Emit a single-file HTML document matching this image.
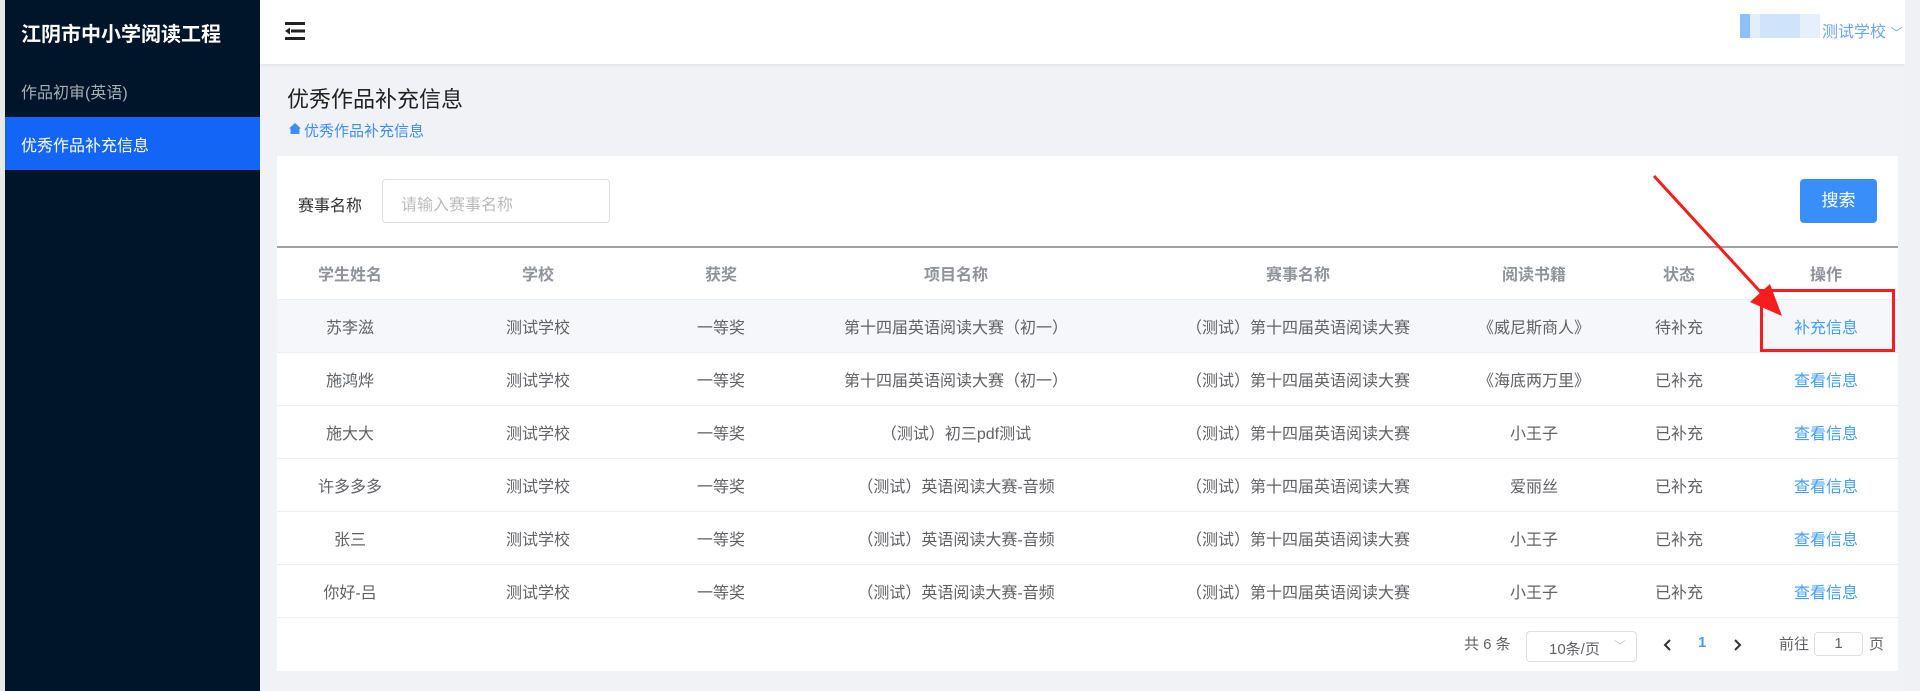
<!DOCTYPE html>
<html><head><meta charset="utf-8"><style>
*{margin:0;padding:0;box-sizing:border-box}
body{width:1920px;height:691px;overflow:hidden;background:#f0f2f5;font-family:"Liberation Sans","Noto Sans CJK SC",sans-serif;position:relative;color:#606266}
.abs{position:absolute}
.c{position:absolute;transform:translate(-50%,-50%);white-space:nowrap;font-size:16px}
</style></head><body>
<div class="abs" style="left:0;top:0;width:5px;height:691px;background:#e8e8e8"></div>
<div class="abs" style="left:5px;top:0;width:255px;height:691px;background:#001529"></div>
<div class="abs" style="left:21px;top:18px;font-size:20px;font-weight:bold;color:#fff">江阴市中小学阅读工程</div>
<div class="abs" style="left:21px;top:79px;font-size:16px;color:#a6adb4">作品初审(英语)</div>
<div class="abs" style="left:5px;top:117px;width:255px;height:53px;background:#1366f5"></div>
<div class="abs" style="left:21px;top:132px;font-size:16px;color:#fff">优秀作品补充信息</div>
<div class="abs" style="left:260px;top:0;width:1645px;height:64px;background:#fff;box-shadow:0 1px 4px rgba(0,21,41,.08)"></div>
<div class="abs" style="left:1905px;top:0;width:15px;height:691px;background:#f0f1f4"></div>
<svg class="abs" style="left:285px;top:22px" width="20" height="18" viewBox="0 0 20 18"><rect x="0" y="0" width="20" height="3" fill="#222"/><rect x="6" y="7.5" width="14" height="3" fill="#222"/><rect x="0" y="15" width="20" height="3" fill="#222"/><path d="M0 9 L5 5.5 L5 12.5Z" fill="#222"/></svg>
<div class="abs" style="left:1740px;top:14px;width:80px;height:24px;background:linear-gradient(90deg,#8fbff8 0 10px,#e2eefc 10px 20px,#cfe3fb 20px 60px,#e6f0fd 60px)"></div>
<div class="abs" style="left:1822px;top:18px;font-size:16px;color:#6aa5f2">测试学校 <span style="font-size:12px">﹀</span></div>
<div class="abs" style="left:287px;top:82px;font-size:22px;color:#222">优秀作品补充信息</div>
<svg class="abs" style="left:289px;top:123px" width="12" height="11" viewBox="0 0 12 11"><path d="M6 0 L12 5.5 L10.5 5.5 L10.5 11 L1.5 11 L1.5 5.5 L0 5.5Z" fill="#3f8cf5"/></svg>
<div class="abs" style="left:304px;top:120px;font-size:15px;color:#3f8cf5">优秀作品补充信息</div>
<div class="abs" style="left:277px;top:156px;width:1621px;height:515px;background:#fff"></div>
<div class="abs" style="left:298px;top:192px;font-size:16px;color:#333">赛事名称</div>
<div class="abs" style="left:382px;top:179px;width:228px;height:44px;border:1px solid #dcdfe6;border-radius:4px;font-size:16px;color:#bbb;padding:11px 18px">请输入赛事名称</div>
<div class="abs" style="left:1800px;top:179px;width:77px;height:44px;background:#3a8ef8;border-radius:4px;color:#fff;font-size:17px;text-align:center;line-height:44px">搜索</div>
<div class="abs" style="left:277px;top:246px;width:1621px;height:2px;background:#a0a0a0"></div>
<div class="abs" style="left:277px;top:299px;width:1621px;height:53px;background:#f5f7fa"></div>
<div id="t"></div>
<div class="abs" style="left:1760px;top:289px;width:135px;height:63px;border:3px solid #f51d1d"></div>
<svg class="abs" style="left:0;top:0" width="1920" height="691"><line x1="1654" y1="176" x2="1766" y2="298" stroke="#f51d1d" stroke-width="3"/><path d="M1782 316 L1750 302 L1770 284Z" fill="#f51d1d"/></svg>
<div class="abs" style="left:1464px;top:633px;font-size:15px">共 6 条</div>
<div class="abs" style="left:1526px;top:631px;width:111px;height:31px;border:1px solid #dcdfe6;border-radius:4px;font-size:15px;padding:6px 0 0 22px">10条/页<span style="position:absolute;right:10px;top:5px;color:#c0c4cc;font-size:12px">﹀</span></div>
<svg class="abs" style="left:1663px;top:638px" width="10" height="14" viewBox="0 0 10 14"><path d="M7 2 L2 7 L7 12" fill="none" stroke="#333" stroke-width="2"/></svg>
<div class="abs" style="left:1698px;top:634px;font-size:15px;color:#409eff;font-weight:bold">1</div>
<svg class="abs" style="left:1732px;top:638px" width="10" height="14" viewBox="0 0 10 14"><path d="M3 2 L8 7 L3 12" fill="none" stroke="#333" stroke-width="2"/></svg>
<div class="abs" style="left:1779px;top:633px;font-size:15px">前往</div>
<div class="abs" style="left:1814px;top:632px;width:49px;height:24px;border:1px solid #dcdfe6;border-radius:4px;font-size:15px;text-align:center;line-height:22px">1</div>
<div class="abs" style="left:1869px;top:633px;font-size:15px">页</div>
<script>
var xs=[350,538,721,956,1298,1534,1679,1826];
var h=["学生姓名","学校","获奖","项目名称","赛事名称","阅读书籍","状态","操作"];
var r=[["苏李滋","测试学校","一等奖","第十四届英语阅读大赛（初一）","（测试）第十四届英语阅读大赛","《威尼斯商人》","待补充","补充信息"],
["施鸿烨","测试学校","一等奖","第十四届英语阅读大赛（初一）","（测试）第十四届英语阅读大赛","《海底两万里》","已补充","查看信息"],
["施大大","测试学校","一等奖","（测试）初三pdf测试","（测试）第十四届英语阅读大赛","小王子","已补充","查看信息"],
["许多多多","测试学校","一等奖","（测试）英语阅读大赛-音频","（测试）第十四届英语阅读大赛","爱丽丝","已补充","查看信息"],
["张三","测试学校","一等奖","（测试）英语阅读大赛-音频","（测试）第十四届英语阅读大赛","小王子","已补充","查看信息"],
["你好-吕","测试学校","一等奖","（测试）英语阅读大赛-音频","（测试）第十四届英语阅读大赛","小王子","已补充","查看信息"]];
var s="";
h.forEach(function(t,i){s+='<div class="c" style="left:'+xs[i]+'px;top:273px;color:#909399;font-weight:bold">'+t+'</div>'});
r.forEach(function(row,j){var y=326+53*j;
s+='<div class="abs" style="left:277px;top:'+(299+53*j)+'px;width:1621px;height:1px;background:#ebeef5"></div>';
row.forEach(function(t,i){s+='<div class="c" style="left:'+xs[i]+'px;top:'+y+'px;'+(i==7?'color:#409eff':'')+'">'+t+'</div>'})});
s+='<div class="abs" style="left:277px;top:617px;width:1621px;height:1px;background:#ebeef5"></div>';
document.getElementById("t").innerHTML=s;
</script>
</body></html>
